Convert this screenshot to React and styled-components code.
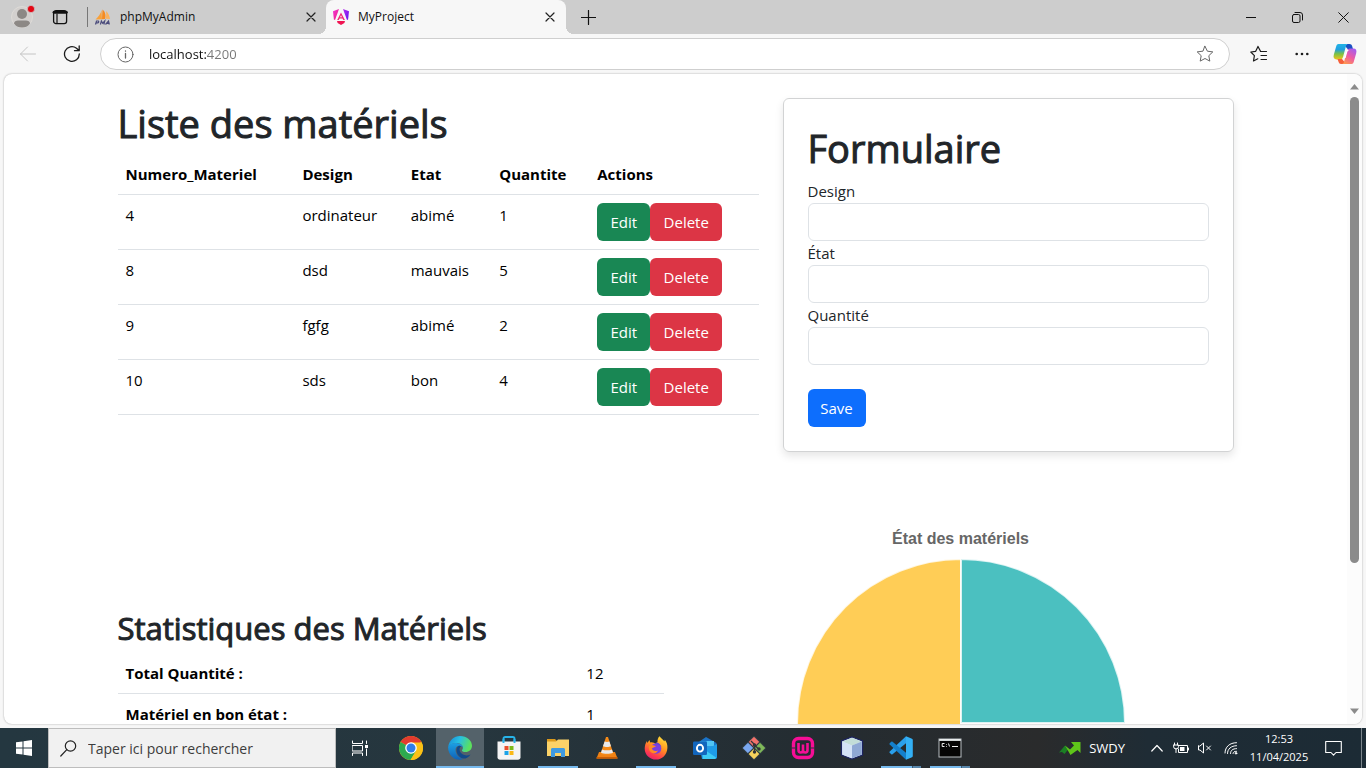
import React from "react";
import styled, { createGlobalStyle, css } from "styled-components";

const GlobalStyle = createGlobalStyle`
  *, *::before, *::after { box-sizing: border-box; }
  body { margin: 0; font-family: "Open Sans", "Noto Sans", sans-serif; color: #212529; overflow: hidden; }
  button { font-family: inherit; margin: 0; padding: 0; border: 0; background: none; cursor: pointer; }
  input { font-family: inherit; margin: 0; }
  svg { display: block; flex: none; }
`;

const Screen = styled.div`
  height: 100vh;
  display: flex;
  flex-direction: column;
  background: #f7f7f7;
`;

/* ---------- browser chrome ---------- */
const TabStrip = styled.header`
  flex: none;
  height: 34px;
  display: flex;
  background: #cdcdcd;
`;
const StripButton = styled.button`
  width: ${(p) => p.$w}px;
  display: flex;
  align-items: center;
  justify-content: center;
  color: #111;
`;
const Tab = styled.div`
  position: relative;
  width: ${(p) => (p.$active ? 240 : 238)}px;
  display: flex;
  align-items: center;
  padding-right: ${(p) => (p.$active ? 6 : 5)}px;
  ${(p) =>
    p.$active &&
    css`
      background: #f7f7f7;
      border-radius: 8px 8px 0 0;
      &::before,
      &::after {
        content: "";
        position: absolute;
        bottom: 0;
        width: 8px;
        height: 8px;
      }
      &::before {
        left: -8px;
        background: radial-gradient(circle at 0 0, transparent 8px, #f7f7f7 8px);
      }
      &::after {
        right: -8px;
        background: radial-gradient(circle at 100% 0, transparent 8px, #f7f7f7 8px);
      }
    `}
`;
const TabLabel = styled.button`
  flex: 1;
  display: flex;
  align-items: center;
  gap: 8px;
  padding-left: 6px;
  font-size: 12px;
  line-height: 16px;
  color: #111;
`;
const TabClose = styled.button`
  width: 20px;
  height: 20px;
  display: flex;
  align-items: center;
  justify-content: center;
  color: #222;
`;
const Divider = styled.span`
  width: 1px;
  height: 20px;
  margin: 7px 0 0 11px;
  background: #777;
`;
const WindowButtons = styled.div`
  display: flex;
  margin-left: auto;
`;
const Toolbar = styled.div`
  flex: none;
  height: 40px;
  padding-left: 6px;
  display: flex;
  align-items: center;
`;
const ToolButton = styled.button`
  width: ${(p) => p.$w || 44}px;
  height: 32px;
  display: flex;
  align-items: center;
  justify-content: center;
  color: ${(p) => (p.$faded ? "#c4c4c4" : "#1b1b1b")};
`;
const AddressBar = styled.form`
  flex: 1;
  height: 32px;
  margin: 0 8px 0 6px;
  padding: 0 15px 0 16px;
  display: flex;
  align-items: center;
  background: #fff;
  border: 1px solid #cfcfcf;
  border-radius: 16px;
`;
const AddressInput = styled.input`
  flex: 1;
  min-width: 0;
  height: 24px;
  padding: 0;
  margin-left: 15px;
  border: 0;
  outline: 0;
  font-size: 13px;
  color: transparent;
  background: linear-gradient(90deg, #111 57px, #767676 57px);
  background-clip: text;
  -webkit-background-clip: text;
`;
const ToolGroup = styled.div`
  display: flex;
  gap: 1px;
`;
const Viewport = styled.div`
  flex: 1;
  min-height: 0;
  margin: 0 4px 4px;
  display: flex;
  overflow: hidden;
  background: #fff;
  border-radius: 8px;
  box-shadow: 0 0 2px rgba(0, 0, 0, 0.35);
`;
const Scrollbar = styled.div`
  flex: none;
  width: 15px;
  padding: 10px 0;
  display: flex;
  flex-direction: column;
  align-items: center;
  background: #fcfcfc;
`;
const Track = styled.div`
  flex: 1;
  margin: 7px 0 6px;
`;
const Thumb = styled.div`
  width: 9px;
  height: 77%;
  border-radius: 5px;
  background: #8b8b8b;
`;

/* ---------- page ---------- */
const Page = styled.main`
  flex: 1;
  min-width: 0;
  overflow: hidden;
`;
const Container = styled.div`
  max-width: 1140px;
  margin: 0 auto;
  padding-top: 24px;
`;
const Row = styled.div`
  display: flex;
  align-items: flex-start;
  margin-top: ${(p) => p.$top || 0}px;
`;
const Col = styled.section`
  width: calc(100% * ${(p) => p.$span} / 12);
  padding: ${(p) => p.$top || 0}px 12px 0;
`;
const Title = styled.h1`
  margin: 0 0 6px;
  font-size: 38px;
  line-height: 50px;
  font-weight: 500;
  -webkit-text-stroke: 1px #212529;
`;
const Subtitle = styled.h2`
  margin: 0 0 6px;
  font-size: 31px;
  line-height: 38px;
  font-weight: 500;
  -webkit-text-stroke: 1px #212529;
`;
const Table = styled.table`
  width: 100%;
  table-layout: fixed;
  border-collapse: collapse;
  font-size: 15px;
  line-height: 24px;
  color: #000;
  th,
  td {
    padding: 8px;
    text-align: left;
    vertical-align: top;
    border-bottom: 1px solid #dee2e6;
  }
  th {
    font-weight: 700;
  }
`;
const Actions = styled.div`
  display: flex;
`;
const colors = { green: "#198754", red: "#dc3545", blue: "#0d6efd" };
const Button = styled.button`
  min-width: ${(p) => p.$w}px;
  height: 38px;
  border-radius: 6px;
  background: ${(p) => colors[p.$tone]};
  color: #fff;
  font-size: 15px;
  line-height: 24px;
`;
const Card = styled.form`
  padding: 24px;
  border: 1px solid #d2d3d4;
  border-radius: 6px;
  box-shadow: 0 4px 8px rgba(0, 0, 0, 0.1);
`;
const Label = styled.label`
  display: block;
  font-size: 15px;
  line-height: 24px;
`;
const Field = styled.input`
  display: block;
  width: 100%;
  height: 38px;
  padding: 6px 12px;
  border: 1px solid #dee2e6;
  border-radius: 6px;
  font-size: 15px;
`;
const Submit = styled.div`
  padding-top: 24px;
`;
const Chart = styled.figure`
  margin: 0;
  display: flex;
  flex-direction: column;
  align-items: center;
  gap: 8px;
`;
const ChartTitle = styled.figcaption`
  font: 700 16px/24px "Liberation Sans", Arial, sans-serif;
  color: #666;
`;

/* ---------- taskbar ---------- */
const Taskbar = styled.footer`
  flex: none;
  height: 40px;
  display: flex;
  color: #fff;
  background: linear-gradient(90deg, #243740 0%, #26363e 35%, #242c31 60%, #2a2b2c 76%, #1f2c35 84%, #1c2b35 100%);
`;
const TaskButton = styled.button`
  position: relative;
  width: 48px;
  height: 40px;
  display: flex;
  align-items: center;
  justify-content: center;
  color: #fff;
  background: ${(p) => (p.$state === "active" ? "#54626a" : "none")};
  ${(p) =>
    p.$state &&
    css`
      &::after {
        content: "";
        position: absolute;
        bottom: 0;
        height: 2px;
        left: ${p.$state === "active" ? 0 : 4}px;
        right: ${p.$state === "active" ? 0 : 4}px;
        background: ${p.$state === "stack"
          ? "linear-gradient(90deg, #76b9ed 31px, #3b5870 31px, #3b5870 32px, #5886aa 32px)"
          : "#76b9ed"};
      }
    `}
`;
const SearchBox = styled.label`
  width: 288px;
  padding: 0 11px;
  display: flex;
  align-items: center;
  gap: 11px;
  background: #f1f1f1;
  border: 1px solid #bdbdbd;
  color: #222;
`;
const SearchInput = styled.input`
  flex: 1;
  min-width: 0;
  border: 0;
  padding: 0;
  outline: 0;
  background: none;
  font-size: 14px;
  &::placeholder {
    color: #3c3c3c;
    opacity: 1;
  }
`;
const Apps = styled.nav`
  display: flex;
  gap: 1px;
  margin-left: 3px;
`;
const Tray = styled.div`
  display: flex;
  margin-left: auto;
`;
const Stock = styled.button`
  display: flex;
  align-items: center;
  gap: 8px;
  margin-right: 20px;
  font-size: 13px;
  color: #fff;
`;
const TrayButton = styled.button`
  width: ${(p) => p.$w}px;
  display: flex;
  align-items: center;
  justify-content: center;
  color: #fff;
`;
const Clock = styled.button`
  width: 70px;
  font-size: 11px;
  line-height: 18px;
  color: #fff;
  text-align: center;
`;
const ShowDesktop = styled.button`
  width: 5px;
  margin-left: 8px;
  border-left: 1px solid #7b858b;
`;

/* ---------- icons ---------- */
const Line = ({ w = 16, h = w, sw = 1, children }) => (
  <svg width={w} height={h} viewBox={`0 0 ${w} ${h}`} fill="none" stroke="currentColor" strokeWidth={sw} strokeLinecap="round" strokeLinejoin="round" aria-hidden="true">
    {children}
  </svg>
);
const Art = ({ size = 24, box = 24, children }) => (
  <svg width={size} height={size} viewBox={`0 0 ${box} ${box}`} aria-hidden="true">
    {children}
  </svg>
);
const CloseIcon = () => (
  <Line w={10} sw={1.2}><path d="M1 1l8 8M9 1L1 9" /></Line>
);
const Avatar = () => (
  <Art size={26} box={26}>
    <circle cx="13" cy="13" r="10.5" fill="#d3d0ce" stroke="#dedbd8" />
    <circle cx="13" cy="10" r="5" fill="#8c8885" />
    <path d="M5 19.500c0-2 2-3 4-3h8c2 0 4 1 4 3-2 3-5 4-8 4s-6-1-8-4z" fill="#8c8885" />
    <circle cx="22" cy="5" r="3.6" fill="#e30613" stroke="#cdcdcd" strokeWidth=".7" />
  </Art>
);
const TabActions = () => (
  <Line w={16} sw={1.3}>
    <rect x="1.6" y="1.6" width="13" height="13" rx="2.4" />
    <path d="M2 3.3h12.4" strokeWidth="2.8" />
    <path d="M5 5v9" strokeWidth="1.2" />
  </Line>
);
const SailIcon = () => (
  <Art size={18} box={18}>
    <path d="M7.5 2C7 6 4 9 1.5 11.5l6.5-.3z" fill="#f9a13a" />
    <path d="M8.5 1.5c3 2.5 3.5 6.500 2.500 9.500l-3 .2z" fill="#f68b1f" />
    <path d="M12 3c2.500 2 3.500 5 4 8l-4.500-.3c.8-2.500 1-5 .5-7.700z" fill="#fbb25c" />
    <path d="M1.500 16.500l1-3.500h1.800q1 .8-.3 1.900H2.200M6.400 16.500l1-3.500 1.300 2.200 2-2.200-.8 3.500M11.500 16.500l3-3.500.8 3.500M12.600 15.400h2.300" fill="none" stroke="#4b4c7c" strokeWidth="1.2" />
  </Art>
);
const AngularIcon = () => (
  <Art size={18} box={18}>
    <defs>
      <linearGradient id="ng-a" x1="0" y1="0" x2="1" y2="1">
        <stop offset="0" stopColor="#f034d8" /><stop offset="1" stopColor="#f0207c" />
      </linearGradient>
      <linearGradient id="ng-b" x1="0" y1="0" x2="1" y2="1">
        <stop offset="0" stopColor="#b52cf0" /><stop offset="1" stopColor="#6514f0" />
      </linearGradient>
    </defs>
    <path d="M7 1L1 3.200l.9 8.300L3 12z" fill="url(#ng-a)" />
    <path d="M11 1l6 2.200-.9 8.300-1.100.5z" fill="url(#ng-b)" />
    <path d="M9 4.500L5.200 12h1.600l.8-1.600h2.900l.8 1.600h1.600zM9 7.200l1 2H8z" fill="#f02a78" />
    <path d="M5 13h8l-.6 2L9 17l-3.400-2z" fill="#f01452" />
  </Art>
);
const FavoritesIcon = () => (
  <Line w={18} sw={1.2}>
    <path d="M10.500 6.300L8 1.400 5.700 6.300.8 7l3.600 3.600-.9 5.400L7.800 13.800M10.500 6.500h6M11 10.500h5.500M11 14.500h5.500" />
  </Line>
);
const Copilot = () => (
  <Art size={24}>
    <defs>
      <linearGradient id="cp-a" x1="0" y1="0" x2="0" y2="1">
        <stop offset="0" stopColor="#22b4e6" /><stop offset=".35" stopColor="#209fe0" /><stop offset=".65" stopColor="#7fc241" /><stop offset="1" stopColor="#f2c21b" />
      </linearGradient>
      <linearGradient id="cp-b" x1=".8" y1="0" x2=".2" y2="1">
        <stop offset="0" stopColor="#a35cf0" /><stop offset=".5" stopColor="#ee5aa3" /><stop offset="1" stopColor="#ff9a4c" />
      </linearGradient>
    </defs>
    <path d="M14 2h2.500c1.500 0 2.200.8 2.600 2l1 3.500h-5L12 4z" fill="#1b50c4" />
    <path d="M5.500 2H15c-1 0-1.700.8-2 2l-3 11c-.5 1.700-1.400 2.500-3 2.500H3.500C1 17.500 0 15.500.8 12.800L3 5C3.500 3 4 2 5.500 2z" fill="url(#cp-a)" />
    <path d="M4.500 17H9l3 3.500L10.500 22H8c-1.400 0-2-.8-2.400-2z" fill="#f5603b" />
    <path d="M18.500 22H9c1 0 1.700-.8 2-2l3-11c.5-1.700 1.400-2.500 3-2.500h3.500c2.500 0 3.500 2 2.700 4.700L21 19c-.5 2-1 3-2.500 3z" fill="url(#cp-b)" />
    <path d="M13.600 8h3c-1.400.2-2 1-2.400 2.300l-1.600 5.700h-3c1.300-.2 1.900-1 2.200-2z" fill="#fff" />
  </Art>
);
const Chrome = () => (
  <Art>
    <circle cx="12" cy="12" r="12" fill="#fbc116" />
    <path d="M12 12L1.600 6A12 12 0 0 1 22.400 6z" fill="#e33b2e" />
    <path d="M12 12L1.600 6A12 12 0 0 0 11.500 24l5.500-9z" fill="#2da94f" />
    <path d="M12 6.500h10.700A12 12 0 0 1 11.500 24l5.500-9z" fill="#fbc116" />
    <circle cx="12" cy="12" r="5.800" fill="#fff" />
    <circle cx="12" cy="12" r="4.500" fill="#2f7de9" />
  </Art>
);
const Edge = () => (
  <Art>
    <defs>
      <linearGradient id="ed-a" x1="0" y1="0" x2="1" y2=".3">
        <stop offset="0" stopColor="#1689d8" /><stop offset=".5" stopColor="#27bfe3" /><stop offset="1" stopColor="#5be05e" />
      </linearGradient>
      <linearGradient id="ed-b" x1="0" y1="0" x2="0" y2="1">
        <stop offset="0" stopColor="#1ba0e4" /><stop offset="1" stopColor="#1161b5" />
      </linearGradient>
    </defs>
    <path d="M.2 11C1 4.500 6 0 12 0c7 0 12 4.700 12 9.800 0 3.800-3 6.300-6.500 6.300-2.400 0-3.600-.8-3.600-1.600 0-.7 1-1.200 1-2.800 0-2.500-2.600-4.700-6.400-4.700C4.500 7 1.500 9 .2 11z" fill="url(#ed-a)" />
    <path d="M.1 11C1.200 8.500 4.500 6.800 8.200 7c4 .1 6.600 2.300 6.700 4.700-1-1.400-2.300-2-3.900-2-3 .2-4 3-3.200 6.300.9 3.800 4.300 6.500 7.700 7C8 26 0 20 .1 11z" fill="url(#ed-b)" />
    <path d="M11 9.700C8.500 10.700 8 14 9 17c1.300 4 5.200 6 8.500 5.400 2-.6 3.800-2 5-3.900-4.500 2-9 .4-10.500-3-1-2.300-.5-4.700 1.600-5-.8-.6-1.600-.9-2.600-.8z" fill="#114a8b" />
  </Art>
);
const Store = () => (
  <Art>
    <path d="M6.500 6V2.700C6.500 1.700 7.200 1 8.200 1h7.600c1 0 1.700.7 1.700 1.700V6" fill="none" stroke="#27b3e8" strokeWidth="1.900" />
    <path d="M.5 5.500h23v15.700c0 1.500-1 2.500-2.500 2.500H3C1.500 23.700.5 22.700.5 21.200z" fill="#f4f4f4" />
    <path d="M6.500 3v4M17.500 3v4" stroke="#27b3e8" strokeWidth="1.900" />
    <path d="M7.500 10h4v4h-4z" fill="#e94f2b" /><path d="M12.500 10h4v4h-4z" fill="#7cba19" />
    <path d="M7.500 15h4v4h-4z" fill="#1ba3e8" /><path d="M12.500 15h4v4h-4z" fill="#fbb915" />
  </Art>
);
const Explorer = () => (
  <Art>
    <path d="M1 3h8l2 2h12v4H1z" fill="#dc9a1c" />
    <path d="M1 5.500h9l2-2h11V20H1z" fill="#fbd268" />
    <path d="M5 21v-7.500c0-.9.600-1.500 1.500-1.500h11c.9 0 1.500.6 1.500 1.500V21h-4v-4H9v4z" fill="#3f9ae0" />
  </Art>
);
const Vlc = () => (
  <Art>
    <path d="M4 16h16l2.500 6.500h-21z" fill="#f08214" />
    <path d="M11 1h2l5.500 17c-3 1.700-10 1.700-13 0z" fill="#f58a18" />
    <path d="M9.600 5.500L8 10.300c2 .9 6 .9 8 0l-1.600-4.800c-1.500.5-3.300.5-4.800 0zM7 13.400l-1 3.300c3 1.400 9 1.400 12 0l-1-3.300c-2.800 1.200-7.200 1.200-10 0z" fill="#e9e9e9" />
    <path d="M1.500 21h21v1.700h-21z" fill="#c95e05" />
  </Art>
);
const Firefox = () => (
  <Art>
    <defs>
      <linearGradient id="fx" x1=".8" y1="0" x2=".3" y2="1">
        <stop offset="0" stopColor="#ffe23c" /><stop offset=".45" stopColor="#ff9420" /><stop offset=".8" stopColor="#ff3b4d" /><stop offset="1" stopColor="#e5226e" />
      </linearGradient>
    </defs>
    <path d="M15.500.2c1.200 2 3.500 3 4.800 5 .8-.2.300-1.200.300-1.700 2.200 2.300 3 5.500 2.800 8.500C23 19 18 23.600 12 23.600S.7 19 .7 12.700c0-3 .8-5.600 2.200-7.800l.4 2L5.500 4l.7 2.500c2-.6 4.200.2 5.300 1.500l2-2c-.2-2.500.700-4.500 2-5.800z" fill="url(#fx)" />
    <circle cx="12" cy="12.500" r="5.300" fill="#7a3fe0" />
    <path d="M5 10c2.500-1.800 5.500-.7 7 .8-2.200 0-3 1.200-4.200 1.800 1 2.600 4 3.200 6.200 1.600-.8 3.400-5 4-7.300 1.800C5 14.400 4.500 12 5 10z" fill="#ff8a24" />
    <path d="M12 6.500c3 0 5 2 5.500 5-1-1.800-2.500-3-5.500-3.500z" fill="#5e46cf" />
  </Art>
);
const Outlook = () => (
  <Art>
    <path d="M5 6.500L13 1l10.500 6v14c0 1.200-.8 2-2 2H9z" fill="#1a73c7" />
    <path d="M7 5h14v10H7z" fill="#2a9be3" /><path d="M13.500 5H21v5h-7.500z" fill="#51c5f5" />
    <path d="M9 15.500L24 8v13c0 1.200-.8 2-2 2H9z" fill="#1e9ce8" />
    <path d="M9 12l14 9.500c-.5 1-1 1.500-2 1.500H10z" fill="#3ecbf4" />
    <rect x="0" y="5.500" width="14" height="13.500" rx="1.300" fill="#1266bd" />
    <ellipse cx="7" cy="12.200" rx="3.100" ry="3.400" fill="none" stroke="#fff" strokeWidth="1.900" />
  </Art>
);
const Git = () => (
  <Art>
    <g transform="rotate(45 12 12)" stroke="#303b40">
      <rect x="3.500" y="3.500" width="8.500" height="8.500" rx="1.200" fill="#f2726b" />
      <rect x="12" y="3.500" width="8.500" height="8.500" rx="1.200" fill="#7fb95a" />
      <rect x="3.500" y="12" width="8.500" height="8.500" rx="1.200" fill="#7aa7ef" />
      <rect x="12" y="12" width="8.500" height="8.500" rx="1.200" fill="#f6d25c" />
    </g>
    <path d="M9 5l3.500 3.500V16M12.500 9l4 4" fill="none" stroke="#303438" strokeWidth="1.300" />
    <circle cx="12.500" cy="9" r="1.700" fill="#303438" /><circle cx="12.500" cy="16" r="1.700" fill="#303438" /><circle cx="17" cy="13" r="1.700" fill="#303438" />
  </Art>
);
const Wamp = () => (
  <Art>
    <rect x="2.500" y="2.500" width="19" height="19" rx="5" fill="none" stroke="#f60e96" strokeWidth="3.400" />
    <path d="M.5 12h4M19.500 12h4" stroke="#26353c" strokeWidth="1.200" />
    <path d="M7.500 7v7c0 1.700.8 2.500 2.300 2.500s2.200-.8 2.200-2.500V8.500M12 14c0 1.700.8 2.500 2.300 2.500s2.200-.8 2.200-2.500V7" fill="none" stroke="#f60e96" strokeWidth="2.600" />
  </Art>
);
const Cube = () => (
  <Art>
    <path d="M12 1l10.500 4v14L12 23 1.500 19V5z" fill="#dce8f8" stroke="#1c2461" strokeWidth="1.300" />
    <path d="M12 1.800L21.500 5.500 12 9.500 2.500 5.500z" fill="#c3ddd8" />
    <path d="M12 9.500l9.700-3.900v12.900L12 22.200z" fill="#8fa8d4" />
    <path d="M12 9.500L2.300 5.600v12.900l9.700 3.700z" fill="#d4e2f7" />
  </Art>
);
const VsCode = () => (
  <Art>
    <path d="M17 .3v7L3.500 18.200c-.4.300-.8.300-1.200 0L.7 16.800c-.4-.4-.4-.9 0-1.300z" fill="#2aa0ec" />
    <path d="M17 23.700v-7L3.500 5.800c-.4-.3-.8-.3-1.200 0L.7 7.200c-.4.400-.4.900 0 1.300z" fill="#1480cd" />
    <path d="M17 .3l6 2.500c.5.300.8.700.8 1.200v16c0 .5-.3 1-.8 1.200l-6 2.500z" fill="#33b0f5" />
  </Art>
);
const Terminal = () => (
  <Art>
    <path d="M.5 2.500h23v19H.5z" fill="#b9bfc2" /><path d="M1.500 5h21v15.500h-21z" fill="#050505" />
    <path d="M1.500 3h21v1.500h-21z" fill="#e9eded" />
    <path d="M6.500 7.500H4.200v3h2.300M8.500 8v.7M8.500 10v.7M10.500 7.500l1 3M14 10.500h6" fill="none" stroke="#eee" />
  </Art>
);

const PieChart = () => (
  <svg width="328" height="328" viewBox="-164 -164 328 328" role="img" aria-label="État des matériels">
    <g stroke="#fff" strokeWidth="2" strokeOpacity=".8">
      <path d="M0 0H164A164 164 0 0 1 0 164z" fill="#ff6384" />
      <path d="M0 0V164A164 164 0 0 1 0 -164z" fill="#ffcd56" />
      <path d="M0 0V-164A164 164 0 0 1 164 0z" fill="#4bc0c0" />
    </g>
  </svg>
);

const materials = [
  [4, "ordinateur", "abimé", 1],
  [8, "dsd", "mauvais", 5],
  [9, "fgfg", "abimé", 2],
  [10, "sds", "bon", 4],
];
const stats = [
  ["Total Quantité :", 12],
  ["Matériel en bon état :", 1],
];
const fields = [
  ["design", "Design"],
  ["etat", "État"],
  ["quantite", "Quantité"],
];
const apps = [
  ["Chrome", Chrome],
  ["Edge", Edge, "active"],
  ["Microsoft Store", Store],
  ["Explorateur", Explorer, "open"],
  ["VLC", Vlc],
  ["Firefox", Firefox, "open"],
  ["Outlook", Outlook],
  ["Git", Git],
  ["Wamp", Wamp],
  ["VirtualBox", Cube],
  ["VS Code", VsCode, "stack"],
  ["Terminal", Terminal, "stack"],
];

function BrowserBar() {
  return (
    <>
      <TabStrip>
        <StripButton $w={44} aria-label="Profil"><Avatar /></StripButton>
        <StripButton $w={32} aria-label="Onglets"><TabActions /></StripButton>
        <Divider />
        <Tab $active={false}>
          <TabLabel><SailIcon />phpMyAdmin</TabLabel>
          <TabClose aria-label="Fermer"><CloseIcon /></TabClose>
        </Tab>
        <Tab $active>
          <TabLabel><AngularIcon />MyProject</TabLabel>
          <TabClose aria-label="Fermer"><CloseIcon /></TabClose>
        </Tab>
        <StripButton $w={44} aria-label="Nouvel onglet">
          <Line w={15} sw={1.2}><path d="M7.500.5v14M.5 7.500h14" /></Line>
        </StripButton>
        <WindowButtons>
          <StripButton $w={46} aria-label="Réduire"><Line w={10}><path d="M0 5.500h10" /></Line></StripButton>
          <StripButton $w={46} aria-label="Restaurer">
            <Line w={11}><rect x=".5" y="2.500" width="7.500" height="8" rx="1.500" /><path d="M3 .5h5a2.500 2.500 0 0 1 2.500 2.500v5" /></Line>
          </StripButton>
          <StripButton $w={46} aria-label="Fermer la fenêtre"><Line w={11}><path d="M.7.7l9.600 9.600M10.300.7L.7 10.300" /></Line></StripButton>
        </WindowButtons>
      </TabStrip>
      <Toolbar>
        <ToolButton $faded aria-label="Retour"><Line w={16}><path d="M.5 8h15M7.500 1L.5 8l7 7" /></Line></ToolButton>
        <ToolButton aria-label="Actualiser">
          <Line w={18} sw={1.3}><path d="M16.300 9A7.400 7.400 0 1 1 13.500 3.200L16 5.500M16.200 1v4.700h-4.700" /></Line>
        </ToolButton>
        <AddressBar onSubmit={(e) => e.preventDefault()}>
          <Line w={17}>
            <g stroke="#666"><circle cx="8.500" cy="8.500" r="7.500" /><path d="M8.500 7.500v4.500M8.500 5v.2" strokeWidth="1.300" /></g>
          </Line>
          <AddressInput aria-label="Adresse" defaultValue="localhost:4200" />
          <Line w={18}><g stroke="#666"><path d="M9 1.300l2.400 4.900 5.400.7-4 3.800 1 5.400L9 13.500l-4.800 2.600 1-5.400-4-3.800 5.400-.7z" /></g></Line>
        </AddressBar>
        <ToolGroup>
          <ToolButton $w={42} aria-label="Favoris"><FavoritesIcon /></ToolButton>
          <ToolButton $w={42} aria-label="Paramètres">
            <Line w={14}><g fill="currentColor" stroke="none"><circle cx="1.700" cy="7" r="1.300" /><circle cx="7" cy="7" r="1.300" /><circle cx="12.300" cy="7" r="1.300" /></g></Line>
          </ToolButton>
          <ToolButton $w={42} aria-label="Copilot"><Copilot /></ToolButton>
        </ToolGroup>
      </Toolbar>
    </>
  );
}

function MaterialList() {
  return (
    <Col $span={7}>
      <Title>Liste des matériels</Title>
      <Table>
        <colgroup>
          <col width="27.6%" /><col width="16.9%" /><col width="13.8%" /><col width="15.3%" /><col width="26.4%" />
        </colgroup>
        <thead>
          <tr><th>Numero_Materiel</th><th>Design</th><th>Etat</th><th>Quantite</th><th>Actions</th></tr>
        </thead>
        <tbody>
          {materials.map(([id, ...rest]) => (
            <tr key={id}>
              <td>{id}</td>
              {rest.map((v, i) => <td key={i}>{v}</td>)}
              <td>
                <Actions>
                  <Button type="button" $tone="green" $w={53}>Edit</Button>
                  <Button type="button" $tone="red" $w={72}>Delete</Button>
                </Actions>
              </td>
            </tr>
          ))}
        </tbody>
      </Table>
    </Col>
  );
}

function MaterialForm() {
  return (
    <Col $span={5}>
      <Card onSubmit={(e) => e.preventDefault()}>
        <Title>Formulaire</Title>
        {fields.map(([id, label]) => (
          <React.Fragment key={id}>
            <Label htmlFor={id}>{label}</Label>
            <Field id={id} type="text" />
          </React.Fragment>
        ))}
        <Submit><Button type="submit" $tone="blue" $w={58}>Save</Button></Submit>
      </Card>
    </Col>
  );
}

function Statistics() {
  return (
    <Col $span={6} $top={82}>
      <Subtitle>Statistiques des Matériels</Subtitle>
      <Table>
        <colgroup><col width="84.4%" /><col width="15.6%" /></colgroup>
        <tbody>
          {stats.map(([label, value]) => (
            <tr key={label}><th scope="row">{label}</th><td>{value}</td></tr>
          ))}
        </tbody>
      </Table>
    </Col>
  );
}

function WindowsTaskbar() {
  return (
    <Taskbar>
      <TaskButton aria-label="Démarrer">
        <Art size={16} box={16}><path d="M0 2.300l6.500-.9v6.100H0zM7.500 1.200L16 0v7.500H7.500zM0 8.500h6.500v6.100L0 13.700zM7.500 8.500H16V16l-8.500-1.200z" fill="#fff" /></Art>
      </TaskButton>
      <SearchBox>
        <Line w={17} sw={1.2}><circle cx="10.500" cy="6" r="5.200" /><path d="M6.800 9.700L.8 16" /></Line>
        <SearchInput type="search" aria-label="Rechercher" placeholder="Taper ici pour rechercher" />
      </SearchBox>
      <TaskButton aria-label="Affichage des tâches">
        <Line w={17}><path d="M.5 1v2.500h10V1M.5 15.500V13h10v2.500M.5 5.500h10v5.500H.5zM14.500 1v2.500M14.500 9v6.500" /><path d="M13 5h3v3h-3z" fill="currentColor" stroke="none" /></Line>
      </TaskButton>
      <Apps>
        {apps.map(([name, Icon, state]) => (
          <TaskButton key={name} aria-label={name} $state={state}><Icon /></TaskButton>
        ))}
      </Apps>
      <Tray>
        <Stock>
          <svg width="22" height="14" viewBox="0 0 22 14" aria-hidden="true">
            <path d="M0 11.500L6 4.500l3.500 3.500-4 5-2.500-2z" fill="#1b7f24" />
            <path d="M6 4.500l5 4 4-4-3-3.500h9.500V12l-3-3-7 5z" fill="#5fc51a" />
          </svg>
          SWDY
        </Stock>
        <TrayButton $w={24} aria-label="Icônes cachées"><Line w={12} sw={1.2}><path d="M.8 9L6 3.500 11.200 9" /></Line></TrayButton>
        <TrayButton $w={24} aria-label="Batterie">
          <Line w={16} h={12}><path d="M5.500 3.500h9v7h-9V7M15.500 6v2M1.500 1v2M4.500 1v2M.5 3h5v1.500a2 2 0 0 1-5 0zM3 6.500v4" /><path d="M7 5h4.500v4H7z" fill="currentColor" stroke="none" /></Line>
        </TrayButton>
        <TrayButton $w={24} aria-label="Volume">
          <Line w={14} h={12}><path d="M.5 4v4H2l3.500 3V1L2 4zM8.500 4l4 4M12.500 4l-4 4" /></Line>
        </TrayButton>
        <TrayButton $w={27} aria-label="Réseau">
          <Line w={14}><path d="M1 12C1 6 5.500 1.700 12.500 1.700M3.500 12.500c0-4.500 3.500-7.700 9-7.800M6.500 12.500c0-3 2-4.800 6-4.900M9 12.500c.2-1.500 1.300-2.200 3.500-2.200" /><circle cx="12" cy="12.300" r=".8" fill="currentColor" /></Line>
        </TrayButton>
        <Clock>12:53<br />11/04/2025</Clock>
        <TrayButton $w={39} aria-label="Notifications">
          <Line w={17} sw={1.1}><path d="M.7 1.500h15.600v11H11l-2.500 2.700L6 12.500H.7z" /></Line>
        </TrayButton>
        <ShowDesktop aria-label="Afficher le bureau" />
      </Tray>
    </Taskbar>
  );
}

export default function App() {
  return (
    <Screen>
      <GlobalStyle />
      <BrowserBar />
      <Viewport>
        <Page>
          <Container>
            <Row>
              <MaterialList />
              <MaterialForm />
            </Row>
            <Row $top={75}>
              <Statistics />
              <Col $span={6}>
                <Chart>
                  <ChartTitle>État des matériels</ChartTitle>
                  <PieChart />
                </Chart>
              </Col>
            </Row>
          </Container>
        </Page>
        <Scrollbar aria-hidden="true">
          <svg width="9" height="6" viewBox="0 0 9 6"><path d="M0 5.500L4.500 0 9 5.500z" fill="#8b8b8b" /></svg>
          <Track><Thumb /></Track>
          <svg width="9" height="6" viewBox="0 0 9 6"><path d="M0 .5L4.500 6 9 .5z" fill="#8b8b8b" /></svg>
        </Scrollbar>
      </Viewport>
      <WindowsTaskbar />
    </Screen>
  );
}
